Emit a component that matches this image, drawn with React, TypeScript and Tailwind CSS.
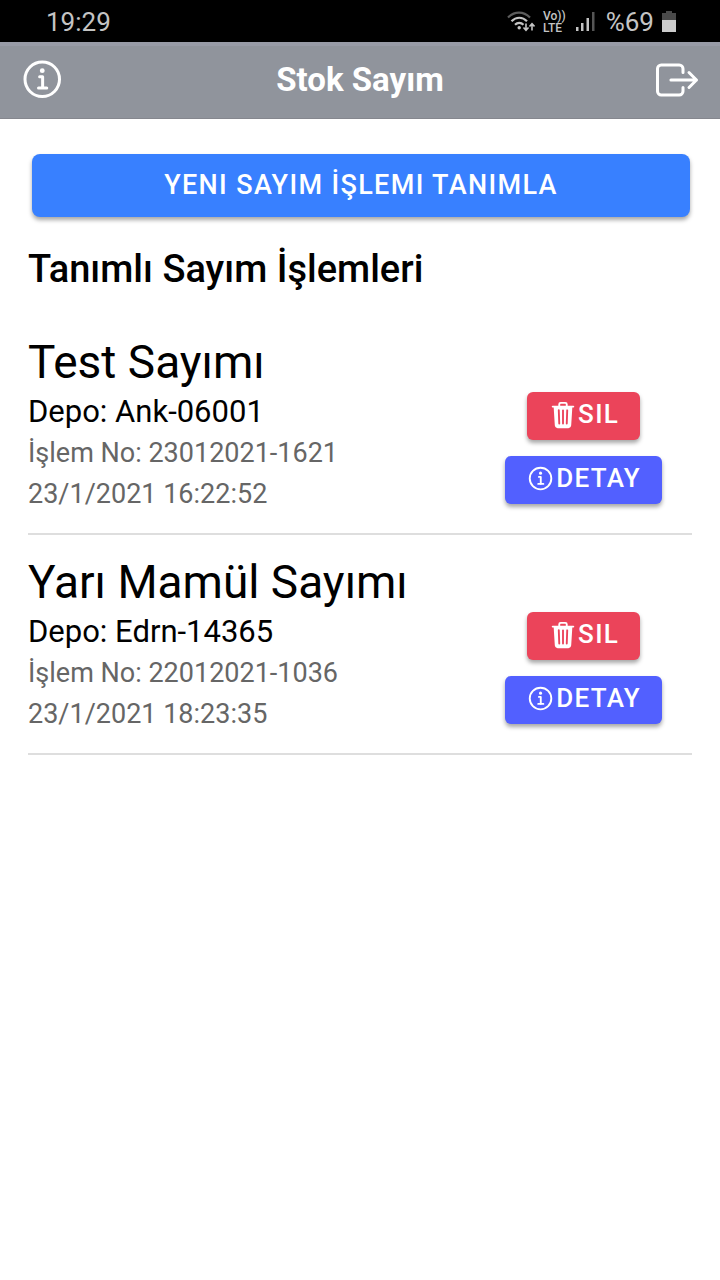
import React, { useState } from 'react';
import { IoExitOutline, IoInformationCircleOutline, IoTrash } from 'react-icons/io5';

type Count = {
    id: string;
    name: string;
    depot: string;
    date: string;
}

const initialCounts: Count[] = [
    { id: '23012021-1621', name: 'Test Sayımı', depot: 'Ank-06001', date: '23/1/2021 16:22:52' },
    { id: '22012021-1036', name: 'Yarı Mamül Sayımı', depot: 'Edrn-14365', date: '23/1/2021 18:23:35' },
];

function StatusBar() {
    return (
        <div className="flex items-center justify-between h-[42px] pt-[2px] pl-[46px] pr-11 bg-black text-[#c4c4c4] text-[26px] leading-8">
            <span>19:29</span>
            <div className="flex items-center gap-2">
                <svg className="w-7 h-6" viewBox="0 0 28 24" fill="none" stroke="currentColor" strokeWidth="2.2">
                    <path d="M1 7.5C7.500 1 16.500 1 23 7.500" stroke="#5c5c5c" />
                    <path d="M4.500 11.200C9 6.600 15.500 6.600 20 11.200" />
                    <path d="M8 14.700C10.500 12.200 14 12.200 16.500 14.700" />
                    <circle cx="12.200" cy="17.800" r="1.700" fill="currentColor" stroke="none" />
                    <path d="M19 13.500V20M16.500 17.500L19 20.200L21.500 17.500" strokeWidth="1.600" />
                    <path d="M25 20.500V14M22.500 16.500L25 13.800L27.500 16.500" strokeWidth="1.600" />
                </svg>
                <div className="flex flex-col text-[12px] leading-3 font-medium">
                    <span>Vo))</span>
                    <span>LTE</span>
                </div>
                <svg className="mx-[2px] w-5 h-5" viewBox="0 0 20 20" fill="currentColor">
                    <rect x="0" y="15" width="2.500" height="4" />
                    <rect x="5" y="11" width="2.500" height="8" />
                    <rect x="10.500" y="6" width="2.500" height="13" />
                    <rect x="16" y="0" width="2.500" height="19" fill="#555555" />
                </svg>
                <span>%69</span>
                <svg className="w-[14px] h-[22px]" viewBox="0 0 14 22">
                    <path d="M4 0H10V2H14V9H0V2H4Z" fill="#4a4a4a" />
                    <rect y="9" width="14" height="12" fill="#cccccc" />
                </svg>
            </div>
        </div>
    );
}

function App() {
    const [counts, setCounts] = useState<Count[]>(initialCounts);

    const handleDelete = (id: string) => {
        setCounts(counts.filter((count) => count.id !== id));
    };

    return (
        <div className="min-h-screen bg-white text-black font-[Roboto,sans-serif]">
            <StatusBar />
            <header className="flex items-center justify-between h-[77px] pb-1 px-[19px] bg-[#90949c] border-t-4 border-t-[#989ba6] border-b border-b-[#85878e] text-white">
                <button type="button" aria-label="Bilgi">
                    <IoInformationCircleOutline className="size-12" />
                </button>
                <h1 className="text-[33px] leading-10 font-bold">Stok Sayım</h1>
                <button type="button" aria-label="Çıkış">
                    <IoExitOutline className="size-12" />
                </button>
            </header>
            <main className="px-7">
                <div className="pt-[35px] pl-1 pr-[2px]">
                    <button
                        type="button"
                        className="w-full h-[63px] rounded-lg bg-[#3880ff] text-white text-[27px] font-medium tracking-wider shadow-[0_3px_4px_rgba(0,0,0,0.35)]"
                    >
                        YENI SAYIM İŞLEMI TANIMLA
                    </button>
                </div>
                <h2 className="mt-7 text-[38px] leading-12 font-medium">Tanımlı Sayım İşlemleri</h2>
                <ul className="mt-[22px]">
                    {counts.map((count) => (
                        <li key={count.id} className="flex items-start justify-between pt-[18px] pb-[18px] border-b-2 border-[#dedede]">
                            <div>
                                <h3 className="text-[46px] leading-[58px]">{count.name}</h3>
                                <p className="text-[31px] leading-[42px]">Depo: {count.depot}</p>
                                <p className="text-[27px] leading-[41px] text-[#666666]">İşlem No: {count.id}</p>
                                <p className="text-[27px] leading-[41px] text-[#666666]">{count.date}</p>
                            </div>
                            <div className="flex flex-col items-center gap-4 pt-[59px] pr-[30px]">
                                <button
                                    type="button"
                                    onClick={() => handleDelete(count.id)}
                                    className="flex items-center h-12 px-[21px] pb-[3px] rounded-md bg-[#eb445a] text-white text-[26px] font-medium tracking-wider shadow-[0_3px_4px_rgba(0,0,0,0.35)]"
                                >
                                    <IoTrash className="size-[30px]" />
                                    SIL
                                </button>
                                <button
                                    type="button"
                                    className="flex items-center h-12 px-[21px] pb-[3px] rounded-md bg-[#5260ff] text-white text-[26px] font-medium tracking-wider shadow-[0_3px_4px_rgba(0,0,0,0.35)]"
                                >
                                    <IoInformationCircleOutline className="size-[30px]" />
                                    DETAY
                                </button>
                            </div>
                        </li>
                    ))}
                </ul>
            </main>
        </div>
    );
}

export default App;
